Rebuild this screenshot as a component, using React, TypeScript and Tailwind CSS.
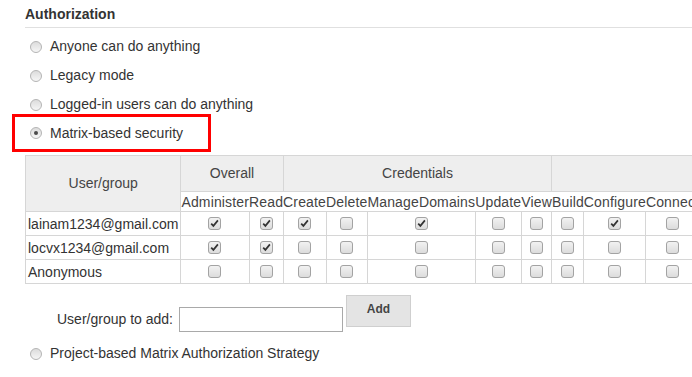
import React from "react";

const cols = [
  "Administer",
  "Read",
  "Create",
  "Delete",
  "ManageDomains",
  "Update",
  "View",
  "Build",
  "Configure",
  "Connect",
  "Create",
  "Delete",
  "Disconnect",
  "Provision",
];

const rows: { user: string; checked: number[] }[] = [
  { user: "lainam1234@gmail.com", checked: [0, 1, 2, 4, 8] },
  { user: "locvx1234@gmail.com", checked: [0, 1] },
  { user: "Anonymous", checked: [] },
];

function Radio({ on = false }: { on?: boolean }) {
  return (
    <span className="w-[12px] h-[12px] rounded-full border border-[#b4b4b4] bg-gradient-to-b from-[#dcdcdc] to-[#f6f6f6] flex items-center justify-center shrink-0">
      {on && <span className="w-[4px] h-[4px] rounded-full bg-[#4a4a4a]" />}
    </span>
  );
}

function Check({ on = false }: { on?: boolean }) {
  return (
    <span className="inline-flex w-[13px] h-[13px] rounded-[3px] border border-[#a3a3a3] bg-gradient-to-b from-[#f2f2f2] to-[#dcdcdc] items-center justify-center align-middle">
      {on && (
        <svg width="9" height="9" viewBox="0 0 9 9">
          <path d="M1.2 4.6 L3.4 6.9 L7.9 1.4" fill="none" stroke="#333" strokeWidth="1.7" />
        </svg>
      )}
    </span>
  );
}

function RadioRow({ label, on }: { label: string; on?: boolean }) {
  return (
    <div className="h-[29px] flex items-center pl-[30px]">
      <Radio on={on} />
      <span className="ml-[8px]">{label}</span>
    </div>
  );
}

const head = "font-normal bg-[#eeeeee] border border-[#d6d6d6] text-[#444]";

export default function App() {
  return (
    <div className="w-[692px] h-[377px] overflow-hidden bg-white text-[14px] text-[#333] font-['Liberation_Sans',Arial,sans-serif]">
      <div className="ml-[25px] pt-[6px] pb-[5px] leading-[16px] font-bold border-b border-[#e0e0e0]">
        Authorization
      </div>

      <div className="mt-[4px]">
        <RadioRow label="Anyone can do anything" />
        <RadioRow label="Legacy mode" />
        <RadioRow label="Logged-in users can do anything" />
        <div className="-mt-[5px] ml-[12px] w-[199px] h-[38px] border-[3px] border-[#ff0000] flex items-center pl-[15px]">
          <Radio on />
          <span className="ml-[8px]">Matrix-based security</span>
        </div>
      </div>

      <table className="mt-[3px] ml-[25px] border-collapse w-max max-w-none">
        <thead>
          <tr className="h-[36px]">
            <th rowSpan={2} className={head}>
              User/group
            </th>
            <th colSpan={2} className={head}>
              Overall
            </th>
            <th colSpan={5} className={head}>
              Credentials
            </th>
            <th colSpan={7} className={head}>
              Agent
            </th>
          </tr>
          <tr className="h-[20px]">
            {cols.map((c, i) => (
              <th key={i} className="font-normal p-0 whitespace-nowrap leading-[18px] tracking-[0.15px] text-[#444]">
                {c}
              </th>
            ))}
          </tr>
        </thead>
        <tbody>
          {rows.map((r) => (
            <tr key={r.user} className="h-[24px]">
              <td className="border border-[#d6d6d6] px-[2px] whitespace-nowrap leading-[22px]">{r.user}</td>
              {cols.map((_, i) => (
                <td key={i} className="border border-[#d6d6d6] p-0 text-center leading-[0]">
                  <Check on={r.checked.includes(i)} />
                </td>
              ))}
            </tr>
          ))}
        </tbody>
      </table>

      <div className="mt-[11px] pl-[57px] flex items-start">
        <span className="mt-[12px] w-[122px] h-[25px] leading-[25px] whitespace-nowrap">User/group to add:</span>
        <input
          type="text"
          className="mt-[12px] w-[164px] h-[25px] border border-[#a9a9a9] bg-white outline-none"
        />
        <button className="ml-[3px] w-[65px] h-[32px] bg-[#e4e4e4] border border-[#cfcfcf] text-[12px] font-bold text-[#444] pb-[5px]">
          Add
        </button>
      </div>

      <div className="mt-[7px]">
        <RadioRow label="Project-based Matrix Authorization Strategy" />
      </div>
    </div>
  );
}
